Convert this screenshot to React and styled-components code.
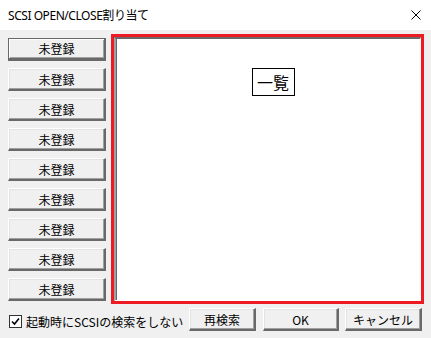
import React from "react";
import styled, { createGlobalStyle, css } from "styled-components";

const Global = createGlobalStyle`
  html, body { margin: 0; padding: 0; background: #f0f0f0; }
  body { width: 431px; height: 338px; overflow: hidden; }
  * { box-sizing: border-box; }
`;

const JP = `"MS Gothic", "Noto Sans CJK JP", "Noto Sans", sans-serif`;

const Window = styled.div`
  width: 431px;
  height: 338px;
  background: #f0f0f0;
  display: flex;
  flex-direction: column;
`;

const TitleBar = styled.div`
  height: 30px;
  background: #ffffff;
  display: flex;
  align-items: center;
  justify-content: space-between;
  padding: 0 10px 0 8px;
`;

const Title = styled.span`
  font-family: "Segoe UI", "Noto Sans", "Noto Sans CJK JP", sans-serif;
  font-size: 12px;
  color: #000;
  letter-spacing: -0.45px;
`;

const CloseIcon = styled.svg`
  width: 10px;
  height: 10px;
  display: block;
`;

const Body = styled.div`
  display: flex;
  align-items: flex-start;
  padding: 4px 7px 0 8px;
  gap: 5px;
`;

const Column = styled.div`
  display: flex;
  flex-direction: column;
  gap: 7px;
  margin-top: 4px;
`;

const Button = styled.button`
  appearance: none;
  margin: 0;
  padding: 0;
  width: ${(p) => p.$w}px;
  height: 23px;
  background: #f0f0f0;
  font-family: ${JP};
  font-size: 12px;
  color: #000;
  border-style: solid;
  border-width: 1px 2px 2px 1px;
  border-color: #ffffff #696969 #696969 #ffffff;
  box-shadow: inset -1px -1px 0 #a0a0a0, inset 1px 1px 0 #e3e3e3;
  ${(p) =>
    p.$default &&
    css`
      border-width: 1px 2px 3px 1px;
      border-color: #696969 #696969 #696969 #696969;
      box-shadow: inset 1px 1px 0 #ffffff, inset -1px -1px 0 #a0a0a0;
    `}
`;

const Frame = styled.div`
  width: 313px;
  height: 270px;
  border: 3px solid #ed1c24;
  display: flex;
`;

const Sunken = styled.div`
  flex: 1;
  background: #ffffff;
  border-style: solid;
  border-width: 2px 1px 1px 2px;
  border-color: #696969 #ffffff #ffffff #a0a0a0;
  box-shadow: inset 1px 0 0 #696969;
  display: flex;
  justify-content: center;
  align-items: flex-start;
  padding-top: 29px;
`;

const ListLabel = styled.div`
  border: 1px solid #000;
  width: 43px;
  height: 28px;
  display: flex;
  align-items: center;
  justify-content: center;
  font-family: ${JP};
  font-size: 16px;
  color: #000;
  margin-left: 10px;
`;

const Footer = styled.div`
  display: flex;
  align-items: center;
  padding: 0 0 0 9px;
  margin-top: 4px;
  height: 23px;
`;

const CheckLabel = styled.label`
  display: flex;
  align-items: center;
  gap: 4px;
  width: 180px;
  font-family: ${JP};
  font-size: 12px;
  color: #000;
  white-space: nowrap;
  padding-top: 3px;
`;

const Box = styled.span`
  width: 13px;
  height: 13px;
  background: #fff;
  border: 1px solid #333;
  display: flex;
  align-items: center;
  justify-content: center;
`;

const Spacer = styled.span`
  width: ${(p) => p.$w}px;
  flex: none;
`;

const labels = Array.from({ length: 9 }, () => "未登録");

export default function App() {
  return (
    <>
      <Global />
      <Window>
        <TitleBar>
          <Title>SCSI OPEN/CLOSE割り当て</Title>
          <CloseIcon viewBox="0 0 10 10">
            <path d="M0.5 0.5 L9.5 9.5 M9.5 0.5 L0.5 9.5" stroke="#000" strokeWidth="1" fill="none" />
          </CloseIcon>
        </TitleBar>
        <Body>
          <Column>
            {labels.map((l, i) => (
              <Button key={i} $w={98} $default={i === 0}>
                {l}
              </Button>
            ))}
          </Column>
          <Frame>
            <Sunken>
              <ListLabel>一覧</ListLabel>
            </Sunken>
          </Frame>
        </Body>
        <Footer>
          <CheckLabel>
            <Box>
              <svg width="9" height="9" viewBox="0 0 9 9">
                <path d="M1 4.5 L3.5 7 L8 1.5" stroke="#000" strokeWidth="1.6" fill="none" />
              </svg>
            </Box>
            起動時にSCSIの検索をしない
          </CheckLabel>
          <Button $w={67}>再検索</Button>
          <Spacer $w={7} />
          <Button $w={76}>OK</Button>
          <Spacer $w={6} />
          <Button $w={77}>キャンセル</Button>
        </Footer>
      </Window>
    </>
  );
}
